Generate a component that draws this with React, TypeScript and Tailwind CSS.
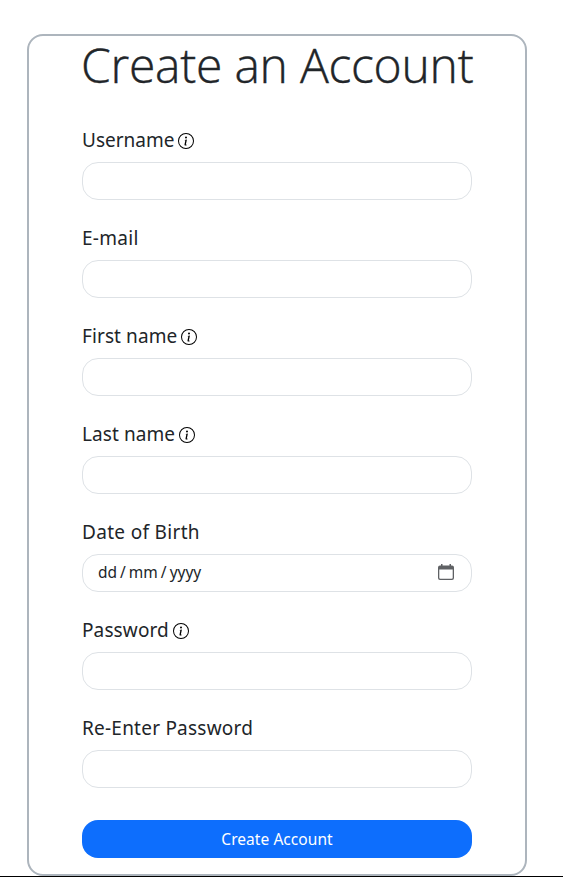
import { BsInfoCircle } from "react-icons/bs";

type FieldProps = { label: string; spacing: string; info?: boolean; date?: boolean };

const fields: FieldProps[] = [
  { label: "Username", spacing: "tracking-[0px]", info: true },
  { label: "E-mail", spacing: "tracking-[0.3px]" },
  { label: "First name", spacing: "tracking-[0.1px]", info: true },
  { label: "Last name", spacing: "tracking-[0.08px]", info: true },
  { label: "Date of Birth", spacing: "tracking-[0.32px]", date: true },
  { label: "Password", spacing: "tracking-[0.12px]", info: true },
  { label: "Re-Enter Password", spacing: "tracking-[0.23px]" },
];

function CalendarIcon() {
  return (
    <svg width="16" height="16" viewBox="0 0 16 16" fill="#5f6164">
      <path fillRule="evenodd" d="M3 0h1.5v1.5h7V0H13v1.5h1A2 2 0 0 1 16 3.5v10.5a2 2 0 0 1-2 2H2a2 2 0 0 1-2-2V3.5a2 2 0 0 1 2-2h1zM1.3 5.5v8.2a1 1 0 0 0 1 1h11.4a1 1 0 0 0 1-1V5.5z" />
    </svg>
  );
}

function Field({ label, spacing, info, date }: FieldProps) {
  return (
    <div>
      <div className="mb-1.5 flex h-8 items-center text-[19px] leading-8">
        <span className={spacing}>{label}</span>
        {info && <BsInfoCircle className="ml-1 mt-px size-4 text-black" />}
      </div>
      <div className="flex h-[38px] items-center justify-between rounded-2xl border border-[#dee2e6] pl-[15px] pr-[17px]">
        {date && (
          <>
            <div className="flex pb-[2px] text-[15.5px] leading-6">
              <span>dd</span>
              <span className="ml-[3px]">/</span>
              <span className="ml-[3px]">mm</span>
              <span className="ml-[3px]">/</span>
              <span className="ml-[3px]">yyyy</span>
            </div>
            <div className="pb-[2px]"><CalendarIcon /></div>
          </>
        )}
      </div>
    </div>
  );
}

export default function App() {
  return (
    <main className="h-[878px] overflow-hidden bg-white pt-[34px] font-['Noto_Sans',sans-serif] text-[#212529]">
      <section className="ml-[27px] h-[842px] w-[500px] rounded-2xl border-2 border-[#adb5bd] px-[53px]">
        <h1 className="h-[88px] whitespace-nowrap font-['Open_Sans',sans-serif] text-[48px] font-light leading-[58px] tracking-[-0.25px] [-webkit-text-stroke:0.4px_#212529]">
          <span className="-ml-px">Create an Account</span>
        </h1>
        <form className="flex flex-col gap-[22px]">
          {fields.map((field) => <Field key={field.label} {...field} />)}
          <button type="button" className="mt-[10px] h-[38px] rounded-2xl bg-[#0d6efd] text-[15.5px] leading-6 tracking-[0.05px] text-white">
            Create Account
          </button>
        </form>
      </section>
      <div className="h-px bg-black" />
    </main>
  );
}
